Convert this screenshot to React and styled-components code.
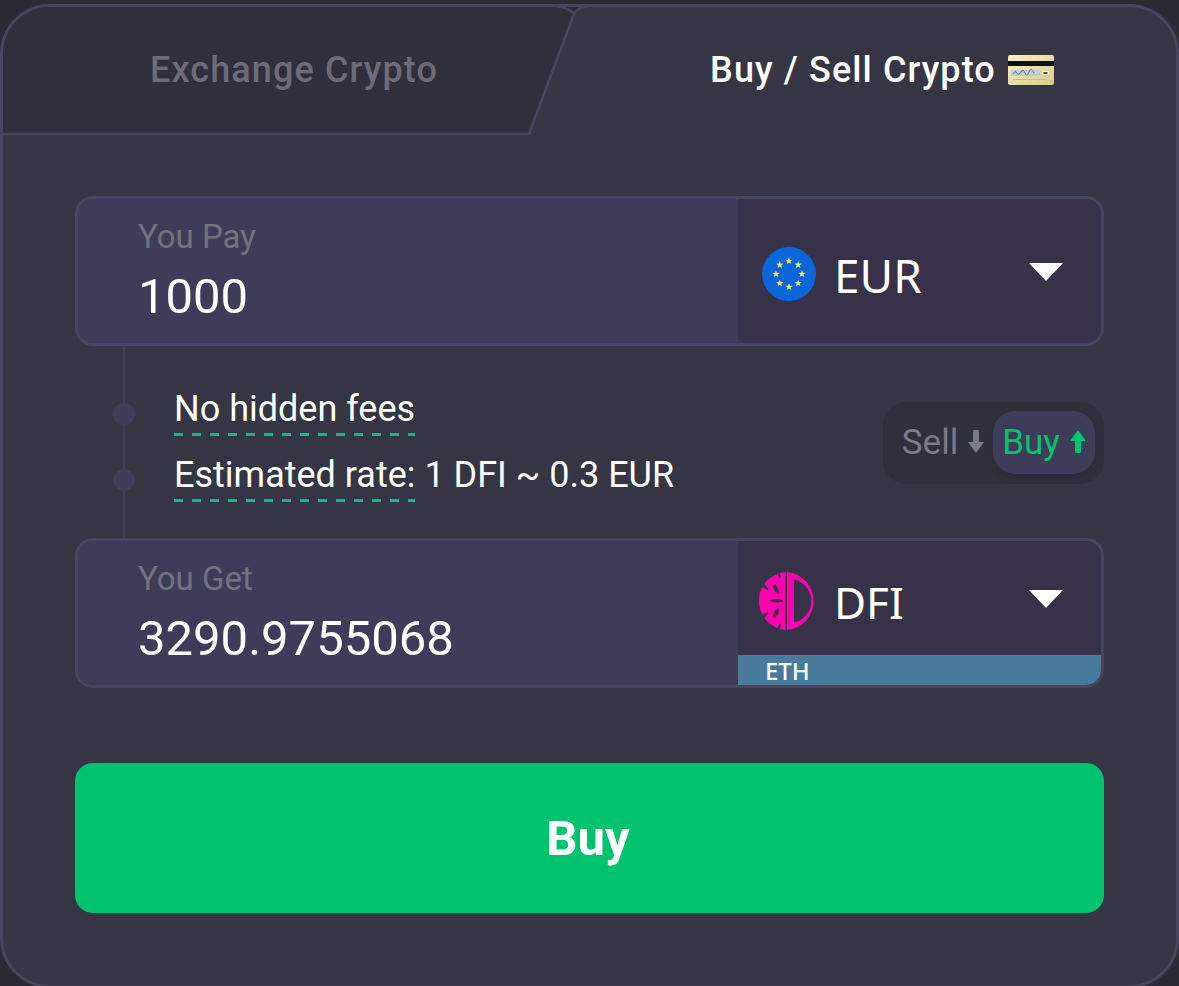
import React from "react";
import styled, { createGlobalStyle } from "styled-components";

const GlobalStyle = createGlobalStyle`
  html, body {
    margin: 0;
    padding: 0;
    background: #2b2a35;
  }
  * {
    box-sizing: border-box;
  }
`;

const starPoints = (cx, cy, r) => {
  const pts = [];
  for (let i = 0; i < 10; i++) {
    const rad = i % 2 === 0 ? r : r * 0.42;
    const a = (Math.PI / 5) * i - Math.PI / 2;
    pts.push(`${(cx + rad * Math.cos(a)).toFixed(2)},${(cy + rad * Math.sin(a)).toFixed(2)}`);
  }
  return pts.join(" ");
};

const EuFlag = () => (
  <svg width="54" height="54" viewBox="0 0 54 54">
    <circle cx="27" cy="27" r="27" fill="#0b66da" />
    {[0, 1, 2, 3, 4, 5, 6, 7].map((i) => {
      const a = (Math.PI / 4) * i - Math.PI / 2;
      return (
        <polygon
          key={i}
          points={starPoints(27 + 13 * Math.cos(a), 27 + 13 * Math.sin(a), 3.8)}
          fill="#f3e867"
        />
      );
    })}
  </svg>
);

const DfiLogo = () => (
  <svg width="58" height="58" viewBox="0 0 58 58">
    <path
      fillRule="evenodd"
      fill="#ff00af"
      d="M28 0.1 A29 29 0 0 1 28 57.9 Z M35 7.5 L35 50.5 A22 22 0 0 0 35 7.5 Z"
    />
    <path fill="#ff00af" d="M26.5 0.1 L26.5 57.9 A29 29 0 0 1 26.5 0.1 Z" />
    <g fill="#373248">
      <path d="M10 28.8 Q17 25.5 24 28.2 L24 29.4 Q17 32 10 28.8 Z" />
      <path d="M13.5 14 L16 12 L19.5 17 L20 22 L15.5 19 Z" />
      <path d="M13.5 44 L16 46 L19.5 41 L20 36 L15.5 39 Z" />
      <path d="M2 14 L4.5 11 L9.5 16.5 L8.5 18.5 Z" />
      <path d="M2 44 L4.5 47 L9.5 41.5 L8.5 39.5 Z" />
      <path d="M18 1 L21 0.4 L22 6 L20.5 6.5 Z" />
      <path d="M18 57 L21 57.6 L22 52 L20.5 51.5 Z" />
    </g>
  </svg>
);

const CardEmoji = () => (
  <svg width="46" height="31" viewBox="0 0 46 31">
    <defs>
      <linearGradient id="cardGold" x1="0" y1="0" x2="1" y2="1">
        <stop offset="0" stopColor="#f8f1c4" />
        <stop offset="1" stopColor="#d8cb8f" />
      </linearGradient>
    </defs>
    <rect x="0" y="0" width="46" height="30" rx="2" fill="url(#cardGold)" />
    <rect x="0" y="6" width="46" height="5" fill="#111111" />
    <rect x="3" y="15" width="29" height="6" fill="#c3cbd0" />
    <path d="M5 19 q2 -4 4 -1 t4 -1 t4 1 t4 -1 t5 1" stroke="#5b6f9e" strokeWidth="0.9" fill="none" />
    <rect x="34" y="16" width="7" height="4" fill="#f4f1dc" />
    <rect x="35.5" y="17" width="4" height="2" fill="#555555" />
    <rect x="5" y="24" width="32" height="1" fill="#c9bd84" />
  </svg>
);

const DownArrow = ({ color }) => (
  <ArrowSvg width="16" height="23" viewBox="0 0 16 23">
    <path
      d="M5 1.5 Q5 0 6.5 0 L9.5 0 Q11 0 11 1.5 L11 12 L15 12 Q16 12 15.4 13 L8.8 22 Q8 23 7.2 22 L0.6 13 Q0 12 1 12 L5 12 Z"
      fill={color}
    />
  </ArrowSvg>
);

const UpArrow = ({ color }) => (
  <ArrowSvg width="16" height="23" viewBox="0 0 16 23">
    <path
      d="M5 21.5 Q5 23 6.5 23 L9.5 23 Q11 23 11 21.5 L11 11 L15 11 Q16 11 15.4 10 L8.8 1 Q8 0 7.2 1 L0.6 10 Q0 11 1 11 L5 11 Z"
      fill={color}
    />
  </ArrowSvg>
);

const TabShape = () => (
  <TabSvg width="600" height="140" viewBox="0 0 600 140">
    <path d="M552 0 Q570 1 575.5 11 Q580 1 598 0 Z" fill="#2b2a35" />
    <path
      d="M0 130 L529 130 L574 10 Q566 1.5 550 1.5 L48 1.5 Q1.5 1.5 1.5 48 L1.5 130 Z"
      fill="#302f3c"
    />
    <path
      d="M0 130 L529 130 L574 10 Q566 1.5 550 1.5 L48 1.5 Q1.5 1.5 1.5 48"
      fill="none"
      stroke="#46455f"
      strokeWidth="2.5"
    />
    <path d="M574 10 Q579 1.5 594 1.5 L610 1.5" fill="none" stroke="#46455f" strokeWidth="2.5" />
  </TabSvg>
);

const Field = ({ label, value, symbol, icon, network, compact }) => (
  <FieldBox>
    <FieldInput>
      <FieldLabel>{label}</FieldLabel>
      <FieldValue>{value}</FieldValue>
    </FieldInput>
    <CurrencyPanel>
      <CurrencyRow $compact={compact}>
        <CurrencyIcon $compact={compact}>{icon}</CurrencyIcon>
        <CurrencyName $compact={compact}>{symbol}</CurrencyName>
        <Caret />
      </CurrencyRow>
      {network && <NetworkStrip>{network}</NetworkStrip>}
    </CurrencyPanel>
  </FieldBox>
);

export default function App() {
  return (
    <>
      <GlobalStyle />
      <Page>
        <Card>
          <TabRow>
            <TabShape />
            <Tab>Exchange Crypto</Tab>
            <Tab $active>
              Buy / Sell Crypto <CardEmoji />
            </Tab>
          </TabRow>
          <FormBody>
            <Field label="You Pay" value="1000" symbol="EUR" icon={<EuFlag />} />
            <Middle>
              <Rail>
                <RailDot />
                <RailDot />
              </Rail>
              <Notes>
                <Note>
                  No hidden fees
                  <Dashes />
                </Note>
                <Note>
                  Estimated rate: 1 DFI ~ 0.3 EUR
                  <Dashes />
                </Note>
              </Notes>
              <Toggle>
                <ToggleOption>
                  Sell <DownArrow color="#7b7a86" />
                </ToggleOption>
                <ToggleOption $active>
                  Buy <UpArrow color="#00c26f" />
                </ToggleOption>
              </Toggle>
            </Middle>
            <Field
              label="You Get"
              value="3290.9755068"
              symbol="DFI"
              icon={<DfiLogo />}
              network="ETH"
              compact
            />
            <BuyButton>Buy</BuyButton>
          </FormBody>
        </Card>
      </Page>
    </>
  );
}

const Page = styled.div`
  width: 1179px;
  height: 986px;
  padding-top: 4px;
  overflow: hidden;
  font-family: "Roboto", sans-serif;
`;

const Card = styled.div`
  width: 1179px;
  height: 984px;
  background: #363543;
  border: 3px solid #46455f;
  border-radius: 50px;
  overflow: hidden;
`;

const TabRow = styled.div`
  position: relative;
  display: grid;
  grid-template-columns: 582px 1fr;
  height: 128px;
`;

const TabSvg = styled.svg`
  position: absolute;
  top: -3px;
  left: -3px;
`;

const ArrowSvg = styled.svg`
  margin-top: -3px;
`;

const Tab = styled.div`
  position: relative;
  display: flex;
  align-items: center;
  justify-content: center;
  gap: 12px;
  padding-left: ${(p) => (p.$active ? "3px" : "0")};
  padding-bottom: 2px;
  font-size: 36px;
  font-weight: 500;
  letter-spacing: 1.1px;
  color: ${(p) => (p.$active ? "#ffffff" : "#6c6b78")};
`;

const FormBody = styled.div`
  display: flex;
  flex-direction: column;
  padding: 61px 72px 0;
`;

const FieldBox = styled.div`
  display: flex;
  height: 150px;
  border: 3px solid #46455f;
  border-radius: 18px;
  overflow: hidden;
`;

const FieldInput = styled.div`
  flex: 1;
  display: flex;
  flex-direction: column;
  padding: 20px 0 0 60px;
  background: #3e3d59;
`;

const FieldLabel = styled.div`
  font-size: 33px;
  line-height: 36px;
  color: #72717f;
`;

const FieldValue = styled.div`
  margin-top: 13px;
  font-size: 49px;
  line-height: 58px;
  color: #ffffff;
`;

const CurrencyPanel = styled.div`
  width: 363px;
  display: flex;
  flex-direction: column;
  background: #373248;
`;

const CurrencyRow = styled.div`
  flex: 1;
  display: flex;
  align-items: center;
  padding: ${(p) => (p.$compact ? "6px 38px 0 21px" : "6px 38px 0 24px")};
`;

const CurrencyIcon = styled.div`
  display: flex;
  margin-right: ${(p) => (p.$compact ? "17px" : "18px")};
`;

const CurrencyName = styled.div`
  flex: 1;
  padding-top: 2px;
  font-family: "Noto Sans", sans-serif;
  font-size: ${(p) => (p.$compact ? "44px" : "46px")};
  color: #ffffff;
`;

const Caret = styled.div`
  width: 0;
  height: 0;
  margin-bottom: 4px;
  border-left: 17px solid transparent;
  border-right: 17px solid transparent;
  border-top: 18px solid #ffffff;
`;

const NetworkStrip = styled.div`
  height: 30px;
  padding-left: 27px;
  background: #477a9b;
  font-family: "Noto Sans", sans-serif;
  font-size: 24px;
  font-weight: 500;
  line-height: 31px;
  color: #ffffff;
`;

const Middle = styled.div`
  display: flex;
  align-items: center;
  height: 192px;
  padding-left: 39px;
`;

const Rail = styled.div`
  position: relative;
  width: 20px;
  height: 100%;
  display: flex;
  flex-direction: column;
  align-items: center;
  gap: 44px;
  padding-top: 57px;
  margin-right: 40px;

  &::before {
    content: "";
    position: absolute;
    top: 0;
    bottom: 0;
    left: 9px;
    width: 2px;
    background: #3f3e56;
  }
`;

const RailDot = styled.span`
  position: relative;
  width: 22px;
  height: 22px;
  flex-shrink: 0;
  border-radius: 50%;
  background: #3f3e56;
`;

const Notes = styled.div`
  flex: 1;
  display: flex;
  flex-direction: column;
  gap: 18px;
  padding-top: 6px;
`;

const Note = styled.div`
  font-size: 36px;
  line-height: 42px;
  color: #ffffff;
`;

const Dashes = styled.div`
  width: 241px;
  height: 3px;
  margin-top: 3px;
  background: repeating-linear-gradient(90deg, #0cbb88 0 9px, transparent 9px 18px);
`;

const Toggle = styled.div`
  display: flex;
  align-items: center;
  justify-content: flex-end;
  width: 221px;
  height: 82px;
  margin-top: 1px;
  padding-right: 9px;
  border-radius: 24px;
  background: #302f3c;
`;

const ToggleOption = styled.div`
  display: flex;
  align-items: center;
  justify-content: center;
  gap: 10px;
  height: 63px;
  width: ${(p) => (p.$active ? "102px" : "110px")};
  padding-left: ${(p) => (p.$active ? "0" : "10px")};
  border-radius: 22px;
  font-size: 35px;
  color: ${(p) => (p.$active ? "#00c26f" : "#7b7a86")};
  background: ${(p) => (p.$active ? "#3e3d59" : "transparent")};
  box-shadow: ${(p) => (p.$active ? "0 3px 8px rgba(0, 0, 0, 0.12)" : "none")};
`;

const BuyButton = styled.button`
  height: 150px;
  margin-top: 75px;
  padding: 0 3px 0 0;
  border: none;
  border-radius: 18px;
  background: #00c26f;
  font-family: "Roboto", sans-serif;
  font-size: 49px;
  font-weight: 700;
  color: #ffffff;
`;
